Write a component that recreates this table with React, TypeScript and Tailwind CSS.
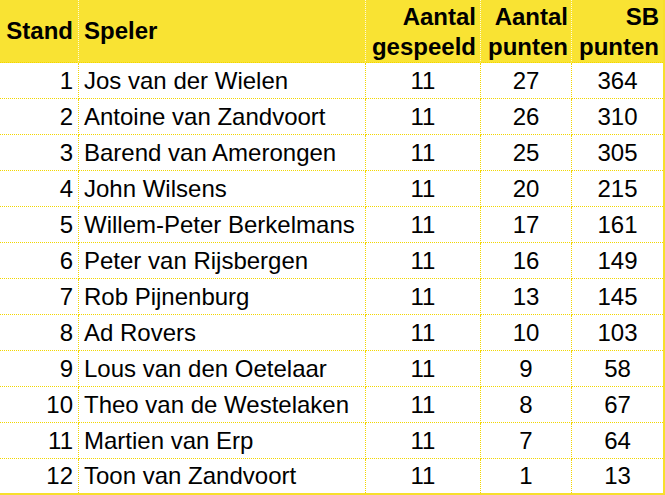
import React from "react";

const rows: [number, string, number, number, number][] = [
  [1, "Jos van der Wielen", 11, 27, 364],
  [2, "Antoine van Zandvoort", 11, 26, 310],
  [3, "Barend van Amerongen", 11, 25, 305],
  [4, "John Wilsens", 11, 20, 215],
  [5, "Willem-Peter Berkelmans", 11, 17, 161],
  [6, "Peter van Rijsbergen", 11, 16, 149],
  [7, "Rob Pijnenburg", 11, 13, 145],
  [8, "Ad Rovers", 11, 10, 103],
  [9, "Lous van den Oetelaar", 11, 9, 58],
  [10, "Theo van de Westelaken", 11, 8, 67],
  [11, "Martien van Erp", 11, 7, 64],
  [12, "Toon van Zandvoort", 11, 1, 13],
];

export default function App() {
  return (
    <div className="w-[665px] h-[495px] bg-white text-black font-['Liberation_Sans',Arial,sans-serif] text-[24px] overflow-hidden">
      <div className="grid grid-cols-[79px_287px_115px_91px_91px] w-[665px] border-r-2 border-b-2 border-[#f7df2c]">
        {/* header */}
        <div className="h-[63px] bg-[#f9e333] border-r border-b border-dotted border-r-[#fffbe0] border-b-[#f2d600] flex items-center justify-end pr-[5px] font-bold leading-[30px]">
          Stand
        </div>
        <div className="h-[63px] bg-[#f9e333] border-r border-b border-dotted border-r-[#fffbe0] border-b-[#f2d600] flex items-center pl-[5px] font-bold leading-[30px]">
          Speler
        </div>
        <div className="h-[63px] bg-[#f9e333] border-r border-b border-dotted border-r-[#fffbe0] border-b-[#f2d600] flex flex-col justify-center items-end pr-[4px] font-bold leading-[30px] pt-[1px]">
          <span>Aantal</span>
          <span>gespeeld</span>
        </div>
        <div className="h-[63px] bg-[#f9e333] border-r border-b border-dotted border-r-[#fffbe0] border-b-[#f2d600] flex flex-col justify-center items-end pr-[3px] font-bold leading-[30px] pt-[1px]">
          <span>Aantal</span>
          <span>punten</span>
        </div>
        <div className="h-[63px] bg-[#f9e333] border-b border-dotted border-b-[#f2d600] flex flex-col justify-center items-end pr-[4px] font-bold leading-[30px] pt-[1px]">
          <span>SB</span>
          <span>punten</span>
        </div>
        {rows.map((r, i) => {
          const last = i === rows.length - 1;
          const base = last
            ? "h-[34px] flex items-center"
            : "h-[36px] flex items-center border-b border-dotted border-b-[#f2d600]";
          const rb = " border-r border-dotted border-r-[#f2d600]";
          return (
            <React.Fragment key={r[0]}>
              <div className={base + rb + " justify-end pr-[5px]"}>{r[0]}</div>
              <div className={base + rb + " pl-[5px] whitespace-nowrap"}>{r[1]}</div>
              <div className={base + rb + " justify-center"}>{r[2]}</div>
              <div className={base + rb + " justify-center"}>{r[3]}</div>
              <div className={base + " justify-center"}>{r[4]}</div>
            </React.Fragment>
          );
        })}
      </div>
    </div>
  );
}
